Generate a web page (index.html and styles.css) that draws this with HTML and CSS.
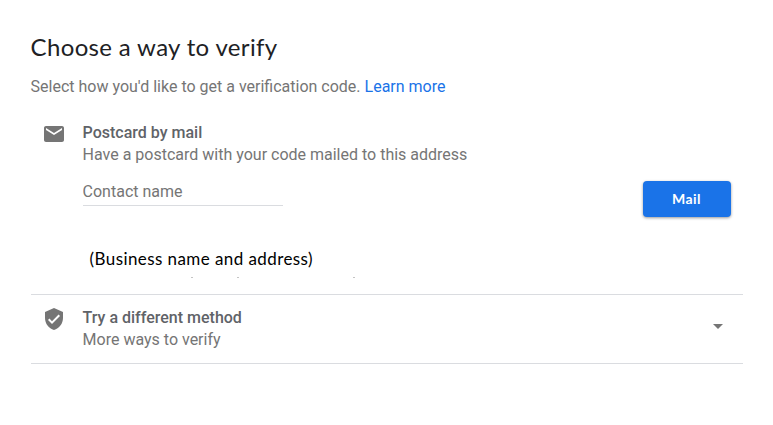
FILE: index.html
```html
<!DOCTYPE html>
<html lang="en">
<head>
    <meta charset="UTF-8">
    <meta name="viewport" content="width=device-width, initial-scale=1.0">
    <title>Choose a way to verify</title>
    <link rel="stylesheet" href="styles.css">
</head>
<body>
    <main class="container">
        <h1>Choose a way to verify</h1>
        <p class="intro">Select how you'd like to get a verification code. <a href="#">Learn more</a></p>

        <section class="method mail">
            <svg class="icon" viewBox="0 0 24 24"><path d="M20 4H4c-1.1 0-1.99.9-1.99 2L2 18c0 1.1.9 2 2 2h16c1.1 0 2-.9 2-2V6c0-1.1-.9-2-2-2zm0 4l-8 5-8-5V6l8 5 8-5v2z"/></svg>
            <div class="details">
                <h2>Postcard by mail</h2>
                <p>Have a postcard with your code mailed to this address</p>
                <div class="form-row">
                    <input type="text" class="contact" placeholder="Contact name">
                    <button>Mail</button>
                </div>
                <p class="address">(Business name and address)</p>
                <div class="marks"><span></span><span></span><span></span></div>
            </div>
        </section>

        <section class="method other">
            <svg class="icon" viewBox="0 0 24 24"><path d="M12 1L3 5v6c0 5.55 3.84 10.74 9 12 5.16-1.26 9-6.45 9-12V5l-9-4zm-2 16l-4-4 1.41-1.41L10 14.17l6.59-6.59L18 9l-8 8z"/></svg>
            <div class="details">
                <h2>Try a different method</h2>
                <p>More ways to verify</p>
            </div>
            <span class="arrow"></span>
        </section>
    </main>
</body>
</html>
```

FILE: styles.css
```css
* {
    box-sizing: border-box;
}
body {
    margin: 0;
    background-color: #fff;
    color: #757575;
    font-family: Roboto, sans-serif;
    font-size: 16px;
    line-height: 22px;
}
h1, h2, p {
    margin: 0;
}
.container {
    width: 743px;
    padding: 31px 0 0 30.6px;
}
h1 {
    color: #202124;
    font-family: Lato, sans-serif;
    font-size: 24px;
    font-weight: 400;
    line-height: 32px;
    letter-spacing: 0.34px;
}
.intro {
    margin-top: 13px;
}
a {
    color: #1a73e8;
    text-decoration: none;
}
.method {
    display: flex;
    border-bottom: 1px solid #dadce0;
}
.mail {
    height: 173px;
    margin-top: 24px;
}
.icon {
    flex: none;
    width: 24px;
    height: 24px;
    margin: 0 16.6px 0 11.4px;
    fill: #757575;
}
.details {
    flex: 1;
}
h2 {
    color: #5f6368;
    font-size: 16px;
    font-weight: 500;
}
.form-row {
    display: flex;
    justify-content: space-between;
    padding-right: 12px;
    margin-top: 15px;
}
.contact {
    width: 200px;
    height: 25px;
    padding: 0 0 3px;
    border: none;
    border-bottom: 1px solid #dadce0;
    outline: none;
    font: inherit;
}
.contact::placeholder {
    color: #757575;
}
button {
    width: 88px;
    height: 36px;
    padding: 0 7px 2px 6px;
    border: none;
    border-radius: 4px;
    background-color: #1a73e8;
    color: #fff;
    font: bold 14px Lato, sans-serif;
    letter-spacing: 0.4px;
    box-shadow: 0 1px 3px rgba(0, 0, 0, 0.4);
}
.address {
    margin: 31px 0 0 7px;
    color: #000;
    font-family: Lato, sans-serif;
    font-size: 17px;
    letter-spacing: 0.42px;
}
.marks {
    display: flex;
    gap: 44px;
    margin: 7px 0 0 108px;
}
.marks span {
    width: 2px;
    height: 1px;
    background-color: #c4c4c4;
}
.marks span:last-child {
    margin-left: 70px;
}
.other {
    height: 69px;
    padding-top: 12px;
}
.arrow {
    align-self: flex-start;
    margin: 17px 19.6px 0 0;
    border: 5px solid transparent;
    border-top-color: #757575;
    border-bottom: none;
}
```
